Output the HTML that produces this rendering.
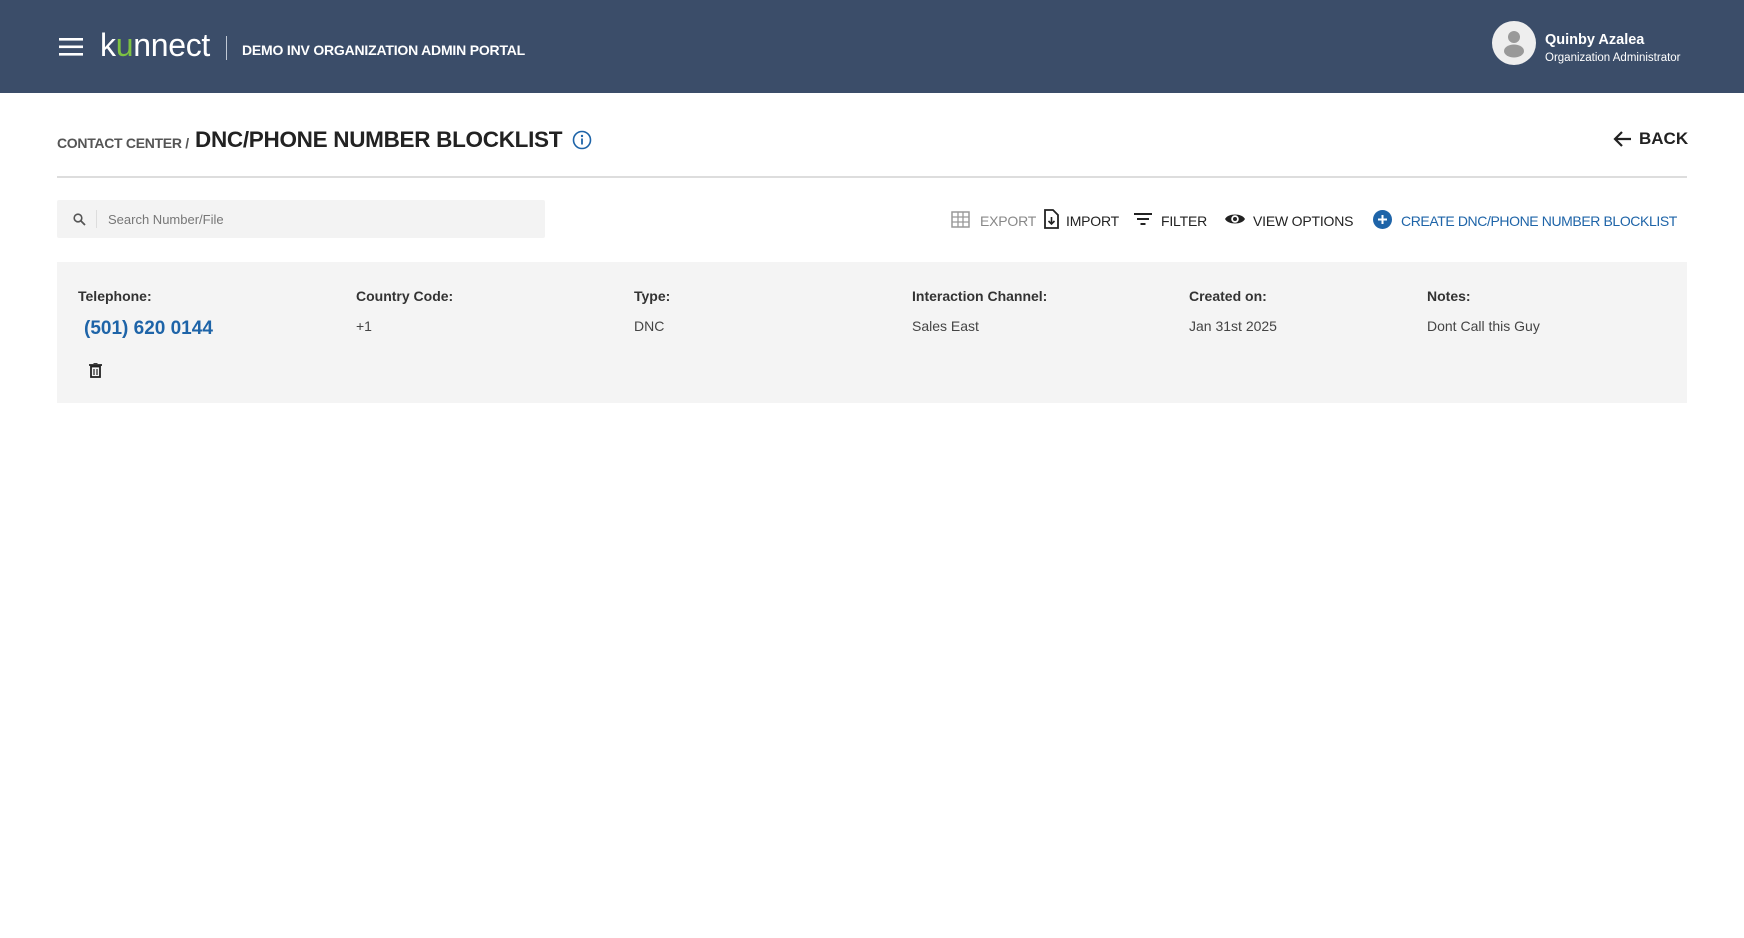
<!DOCTYPE html>
<html><head><meta charset="utf-8"><style>
*{margin:0;padding:0;box-sizing:border-box}
body{width:1744px;height:938px;background:#fff;font-family:"Liberation Sans",Arial,sans-serif;position:relative;overflow:hidden;color:#222}
.a{position:absolute;white-space:nowrap}
.hdr{position:absolute;left:0;top:0;width:1744px;height:93px;background:#3b4d69}
.lab{font-weight:bold;font-size:14px;color:#333}
.val{font-size:14px;color:#444}
.tb{font-size:14px;color:#222;top:213px;letter-spacing:-0.2px}
</style></head><body>
<div class="hdr"></div>
<svg class="a" style="left:59px;top:38px" width="24" height="18"><rect y="0" width="24" height="2.6" fill="#fff"/><rect y="7.5" width="24" height="2.6" fill="#fff"/><rect y="15" width="24" height="2.6" fill="#fff"/></svg>
<div class="a" style="left:100px;top:27px;font-size:32px;color:#fff;letter-spacing:-0.3px">k<span style="color:#7dc242">u</span>nnect</div>
<div class="a" style="left:226px;top:36px;width:1px;height:24px;background:#c0c8d4"></div>
<div class="a" style="left:242px;top:42px;font-size:14px;font-weight:bold;color:#fff;letter-spacing:-0.2px">DEMO INV ORGANIZATION ADMIN PORTAL</div>
<svg class="a" style="left:1492px;top:21px" width="44" height="44"><circle cx="22" cy="22" r="22" fill="#eee"/><circle cx="22" cy="16" r="6" fill="#999"/><ellipse cx="22" cy="30" rx="10" ry="6.5" fill="#999"/></svg>
<div class="a" style="left:1545px;top:32px;font-size:14.5px;font-weight:bold;color:#fff">Quinby Azalea</div>
<div class="a" style="left:1545px;top:52px;font-size:11.5px;color:#fff">Organization Administrator</div>

<div class="a" style="left:57px;top:135px;font-size:14px;font-weight:bold;color:#555;letter-spacing:-0.3px">CONTACT CENTER /</div>
<div class="a" style="left:195px;top:127px;font-size:22.5px;font-weight:bold;color:#222;letter-spacing:-0.3px">DNC/PHONE NUMBER BLOCKLIST</div>
<svg class="a" style="left:572px;top:130px" width="20" height="20"><circle cx="10" cy="10" r="8.5" fill="none" stroke="#1e64a8" stroke-width="1.6"/><circle cx="10" cy="6" r="1.2" fill="#1e64a8"/><rect x="9.1" y="8.5" width="1.8" height="6" fill="#1e64a8"/></svg>
<svg class="a" style="left:1613px;top:130px" width="20" height="18"><path d="M18 9H3M9 2L2 9l7 7" fill="none" stroke="#222" stroke-width="2.2"/></svg>
<div class="a" style="left:1639px;top:129px;font-size:17px;font-weight:bold;color:#222">BACK</div>
<div class="a" style="left:57px;top:176px;width:1630px;height:2px;background:#ddd"></div>

<div class="a" style="left:57px;top:200px;width:488px;height:38px;background:#f3f3f3;border-radius:2px"></div>
<svg class="a" style="left:73px;top:213px" width="13" height="13"><circle cx="5" cy="5" r="3.8" fill="none" stroke="#555" stroke-width="1.6"/><path d="M8 8l4 4" stroke="#555" stroke-width="1.8"/></svg>
<div class="a" style="left:96px;top:210px;width:1px;height:18px;background:#ddd"></div>
<div class="a" style="left:108px;top:212px;font-size:13px;color:#777">Search Number/File</div>

<svg class="a" style="left:951px;top:211px" width="19" height="17"><rect x="1" y="1" width="17" height="15" fill="none" stroke="#999" stroke-width="1.5"/><path d="M1 6h17M1 11h17M7 1v15M12 1v15" stroke="#999" stroke-width="1.3"/></svg>
<div class="a tb" style="left:980px;color:#888">EXPORT</div>
<svg class="a" style="left:1043px;top:209px" width="16" height="20"><path d="M2 1h8l5 5v13H2z" fill="none" stroke="#222" stroke-width="1.8"/><path d="M8.5 8v7M5.5 12l3 3 3-3" fill="none" stroke="#222" stroke-width="1.6"/></svg>
<div class="a tb" style="left:1066px">IMPORT</div>
<svg class="a" style="left:1134px;top:212px" width="18" height="14"><path d="M0 2h18M3 7h12M6.5 12h5" stroke="#222" stroke-width="2"/></svg>
<div class="a tb" style="left:1161px">FILTER</div>
<svg class="a" style="left:1224px;top:211px" width="22" height="16"><path d="M1 8C4 2 18 2 21 8C18 14 4 14 1 8z" fill="#222"/><circle cx="11" cy="8" r="3.8" fill="#fff"/><circle cx="11" cy="8" r="2" fill="#222"/></svg>
<div class="a tb" style="left:1253px">VIEW OPTIONS</div>
<svg class="a" style="left:1373px;top:210px" width="19" height="19"><circle cx="9.5" cy="9.5" r="9.5" fill="#1e64a8"/><path d="M9.5 5v9M5 9.5h9" stroke="#fff" stroke-width="2"/></svg>
<div class="a tb" style="left:1401px;color:#1e64a8;letter-spacing:-0.4px">CREATE DNC/PHONE NUMBER BLOCKLIST</div>

<div class="a" style="left:57px;top:262px;width:1630px;height:141px;background:#f4f4f4"></div>
<div class="a lab" style="left:78px;top:288px">Telephone:</div>
<div class="a lab" style="left:356px;top:288px">Country Code:</div>
<div class="a lab" style="left:634px;top:288px">Type:</div>
<div class="a lab" style="left:912px;top:288px">Interaction Channel:</div>
<div class="a lab" style="left:1189px;top:288px">Created on:</div>
<div class="a lab" style="left:1427px;top:288px">Notes:</div>
<div class="a" style="left:84px;top:318px;font-size:19px;font-weight:bold;color:#1e64a8">(501) 620 0144</div>
<div class="a val" style="left:356px;top:318px">+1</div>
<div class="a val" style="left:634px;top:318px">DNC</div>
<div class="a val" style="left:912px;top:318px">Sales East</div>
<div class="a val" style="left:1189px;top:318px">Jan 31st 2025</div>
<div class="a val" style="left:1427px;top:318px">Dont Call this Guy</div>
<svg class="a" style="left:89px;top:363px" width="13" height="15"><path d="M0 2h13M4.5 0h4" stroke="#222" stroke-width="1.8"/><rect x="2" y="3.5" width="9" height="10.5" fill="none" stroke="#222" stroke-width="1.8"/><path d="M5 6v6M8 6v6" stroke="#222" stroke-width="1.2"/></svg>
</body></html>
